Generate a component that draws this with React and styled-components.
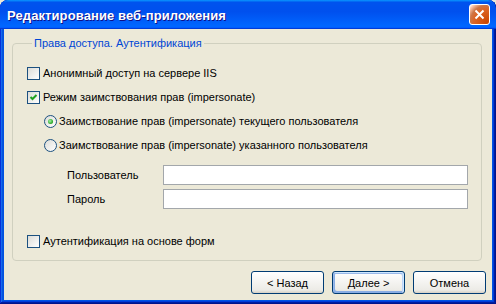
import styled, { createGlobalStyle } from 'styled-components'

const GlobalStyle = createGlobalStyle`
    html, body {
        margin: 0;
        padding: 0;
        background: #ece9d8;
    }
    body {
        font-family: "Liberation Sans", Arial, sans-serif;
        font-size: 11px;
        color: #000;
    }
`

const Window = styled.div`
    width: 496px;
    height: 304px;
    display: flex;
    flex-direction: column;
    background: #0054e3;
    border-radius: 8px 8px 0 0;
    overflow: hidden;
    box-shadow: inset -1px -1px #00138c, inset 1px 1px #0831d9,
        inset -2px -2px #001ea0, inset 2px 2px #166aee,
        inset -3px -3px #003bda, inset 3px 3px #0855dd;
`

const TitleBar = styled.div`
    height: 29px;
    flex: none;
    display: flex;
    align-items: center;
    justify-content: space-between;
    padding: 0 6px 0 7px;
    background: linear-gradient(180deg, #0997ff, #0053ee 8%, #0050ee 40%, #06f 88%, #06f 93%, #005bff 95%, #003dd7 96%, #003dd7);
    border-radius: 8px 8px 0 0;
`

const Title = styled.div`
    color: #fff;
    font-weight: bold;
    font-size: 13px;
    letter-spacing: 0.1px;
    text-shadow: 1px 1px #0f1089;
    padding-top: 1px;
`

const CloseButton = styled.div`
    width: 21px;
    height: 21px;
    box-sizing: border-box;
    border: 1px solid #fff;
    border-radius: 3px;
    background: radial-gradient(circle at 90% 90%, #cc4600 0, #dc6527 55%, #cd7546 70%, #ffccb2 90%, #fff 100%);
    display: flex;
    align-items: center;
    justify-content: center;
`

const Body = styled.div`
    flex: 1;
    margin: 0 4px 4px;
    background: #ece9d8;
    display: flex;
    flex-direction: column;
`

const Group = styled.fieldset`
    margin: 8px 10px 0 8px;
    padding: 11px 13px 7px 14px;
    border: 1px solid #d0d0bf;
    border-radius: 4px;
    display: flex;
    flex-direction: column;
`

const Legend = styled.legend`
    color: #0046d5;
    padding: 0 2px;
    margin-left: 5px;
    line-height: 13px;
`

const Row = styled.div`
    height: 24px;
    display: flex;
    align-items: center;
    padding-left: ${p => p.$indent || 0}px;
    margin-top: ${p => p.$top || 0}px;
`

const Box = styled.span`
    width: 13px;
    height: 13px;
    box-sizing: border-box;
    border: 1px solid #1c5180;
    background: linear-gradient(135deg, #dcdcd7, #fff);
    border-radius: ${p => (p.$round ? '50%' : '0')};
    display: flex;
    align-items: center;
    justify-content: center;
    flex: none;
`

const Dot = styled.span`
    width: 5px;
    height: 5px;
    border-radius: 50%;
    background: radial-gradient(circle at 40% 40%, #a4f4a4, #21a121 70%);
`

const Text = styled.span`
    margin-left: ${p => p.$gap || 3}px;
    white-space: nowrap;
`

const FieldRow = styled.div`
    display: flex;
    align-items: center;
    height: 20px;
    padding-left: 40px;
    margin-top: ${p => p.$top}px;
`

const FieldLabel = styled.span`
    width: 96px;
    flex: none;
`

const Input = styled.div`
    flex: 1;
    height: 20px;
    box-sizing: border-box;
    border: 1px solid #a3a7ab;
    background: #fff;
`

const Footer = styled.div`
    display: flex;
    justify-content: flex-end;
    gap: 8px;
    padding: 10px 6px 0 0;
`

const Button = styled.div`
    width: 73px;
    height: 23px;
    box-sizing: border-box;
    border: 1px solid #003c74;
    border-radius: 3px;
    background: linear-gradient(180deg, #fff, #ecebe6 86%, #d6d0c5);
    display: flex;
    align-items: center;
    justify-content: center;
    box-shadow: ${p => (p.$default
        ? 'inset -1px 1px #cee7ff, inset 1px 2px #98b8ea, inset -2px 2px #bcd4f6, inset 1px -1px #89ade4, inset 2px -2px #89ade4'
        : 'none')};
`

function CheckBox({ checked, children }) {
    return (
        <Row>
            <Box>
                {checked && (
                    <svg width="9" height="9" viewBox="0 0 9 9">
                        <path d="M1.5 4 L3.5 6 L7.5 2" stroke="#21a121" strokeWidth="2" fill="none" />
                    </svg>
                )}
            </Box>
            <Text>{children}</Text>
        </Row>
    )
}

function Radio({ checked, children }) {
    return (
        <Row $indent={17}>
            <Box $round>{checked && <Dot />}</Box>
            <Text $gap={2}>{children}</Text>
        </Row>
    )
}

export default function App() {
    return (
        <>
            <GlobalStyle />
            <Window>
                <TitleBar>
                    <Title>Редактирование веб-приложения</Title>
                    <CloseButton>
                        <svg width="11" height="11" viewBox="0 0 11 11">
                            <path d="M1.5 1.5 L9.5 9.5 M9.5 1.5 L1.5 9.5" stroke="#fff" strokeWidth="2" />
                        </svg>
                    </CloseButton>
                </TitleBar>
                <Body>
                    <Group>
                        <Legend>Права доступа. Аутентификация</Legend>
                        <CheckBox>Анонимный доступ на сервере IIS</CheckBox>
                        <CheckBox checked>Режим заимствования прав (impersonate)</CheckBox>
                        <Radio checked>Заимствование прав (impersonate) текущего пользователя</Radio>
                        <Radio>Заимствование прав (impersonate) указанного пользователя</Radio>
                        <FieldRow $top={8}>
                            <FieldLabel>Пользователь</FieldLabel>
                            <Input />
                        </FieldRow>
                        <FieldRow $top={4}>
                            <FieldLabel>Пароль</FieldLabel>
                            <Input />
                        </FieldRow>
                        <Row $top={20}>
                            <Box />
                            <Text>Аутентификация на основе форм</Text>
                        </Row>
                    </Group>
                    <Footer>
                        <Button>&lt; Назад</Button>
                        <Button $default>Далее &gt;</Button>
                        <Button>Отмена</Button>
                    </Footer>
                </Body>
            </Window>
        </>
    )
}
